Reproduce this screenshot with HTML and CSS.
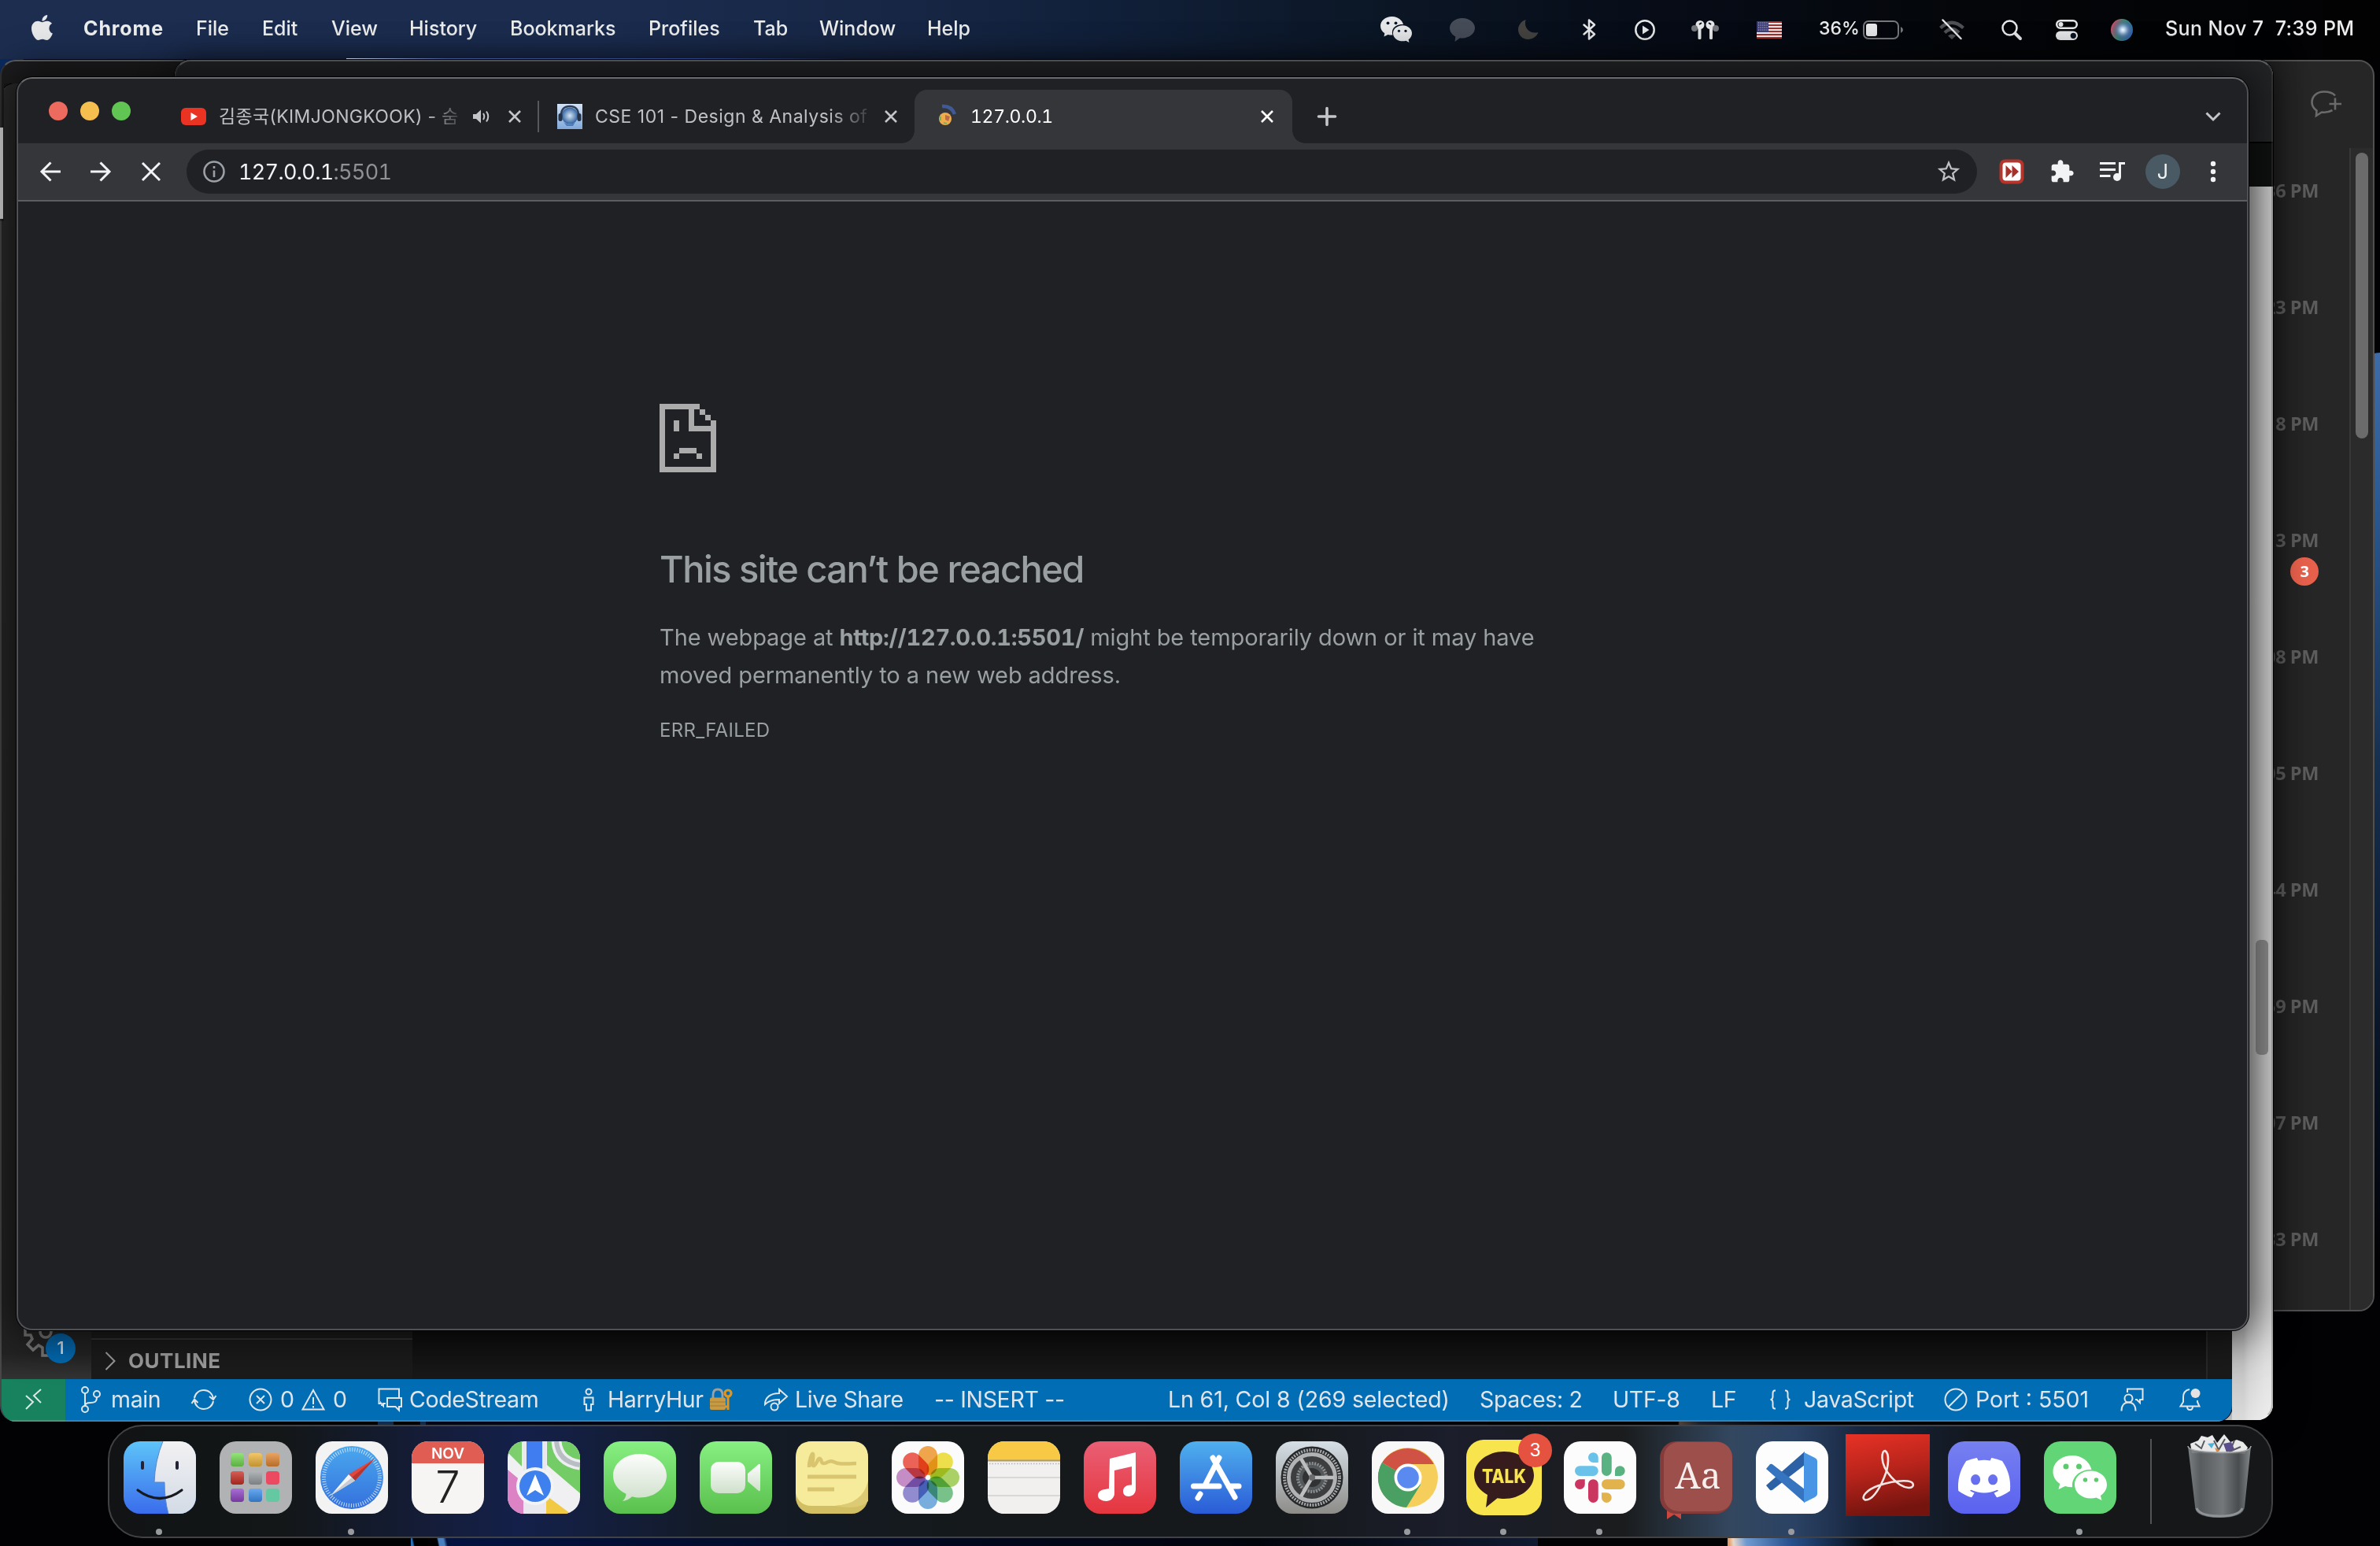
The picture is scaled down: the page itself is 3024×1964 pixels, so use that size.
FILE: index.html
```html
<!DOCTYPE html>
<html lang="en">
<head>
<meta charset="utf-8">
<title>Desktop</title>
<link rel="stylesheet" href="styles.css">
</head>
<body>
<div class="desktop">
  <div class="wall wall-left"></div>
  <div class="wall wall-right"></div>
  <div class="wall wall-gap"></div>
  <div class="wall wall-dusk"></div>
  <div class="wall wall-sea"></div>
  <div class="wall wall-earth"></div>

  <header class="menubar">
    <svg class="apple" viewBox="4 32 364 448" preserveAspectRatio="none"><path d="M318.7 268.7c-.2-36.7 16.4-64.4 50-84.8-18.8-26.9-47.2-41.7-84.7-44.6-35.5-2.8-74.3 20.7-88.5 20.7-15 0-49.4-19.7-76.4-19.7C63.3 141.2 4 184.8 4 273.5q0 39.3 14.4 81.2c12.8 36.7 59 126.7 107.2 125.2 25.2-.6 43-17.9 75.8-17.9 31.8 0 48.3 17.9 76.4 17.9 48.6-.7 90.4-82.5 102.6-119.3-65.2-30.7-61.7-90-61.7-91.9zm-56.6-164.2c27.3-32.4 24.8-61.9 24-72.5-24.1 1.4-52 16.4-67.9 34.9-17.5 19.8-27.8 44.3-25.6 71.9 26.1 2 49.9-11.4 69.5-34.3z"/></svg>
    <span class="app-name">Chrome</span>
    <span>File</span><span>Edit</span><span>View</span><span>History</span><span>Bookmarks</span><span>Profiles</span><span>Tab</span><span>Window</span><span>Help</span>
    <svg width="40" height="33" viewBox="0 0 40 33"><path d="M14.500 0C6.500 0 0 5.200 0 12c0 4 2 7 5.300 9.300L4.500 25.500l5-2.600c2 .5 4 .8 5.900.6C13 15 20 9.500 29 10 27.500 4 21.500 0 14.500 0z"/><path d="M28 11.300c-6.800 0-12 4.500-12 10s5.200 10 12 10c1.600 0 3-.2 4.300-.6l4.200 2.200-.9-3.600c2.700-1.900 4.400-4.800 4.400-8 0-5.500-5.300-10-12-10z"/><g class="hole"><circle cx="9.500" cy="8.300" r="1.900"/><circle cx="19.500" cy="8.300" r="1.900"/><circle cx="23.500" cy="18.300" r="1.600"/><circle cx="32" cy="18.300" r="1.600"/></g></svg>
    <svg width="32" height="30" viewBox="0 0 32 30"><path class="dim" d="M16 0c9 0 16 5.600 16 12.600S25 25.500 16 25.500c-1 0-2 0-3-.2L6.500 30l.8-6.500C3 21.200 0 17.300 0 12.600 0 5.600 7 0 16 0z"/></svg>
    <svg width="26" height="25" viewBox="0 0 26 25"><path class="dusk" d="M9.500 0C3.500 2 0 7.500 0 12.500 0 19.500 5.500 25 12.500 25 18.500 25 23.500 21.500 25.500 16 16 18.500 6.500 12 9.500 0z"/></svg>
    <svg width="17" height="27" viewBox="0 0 17 27"><path class="line" d="M1.500 7.500l13.500 12-7 6V1.500l7 6-13.500 12"/></svg>
    <svg width="26" height="26" viewBox="0 0 26 26"><circle class="line" cx="13" cy="13" r="11.700"/><path d="M10 7.500v11l8.500-5.500z"/></svg>
    <svg width="35" height="24" viewBox="0 0 35 24"><circle cx="11" cy="5.500" r="5.500"/><circle cx="24" cy="5.500" r="5.500"/><rect x="8.500" y="7" width="4" height="17" rx="1.500"/><rect x="23" y="7" width="4" height="17" rx="1.500"/><circle class="dim2" cx="4" cy="10" r="4"/><circle class="dim2" cx="31" cy="10" r="4"/><path class="hole-line" d="M10 5l3-2M25 5l-3-2"/></svg>
    <svg width="32" height="22" viewBox="0 0 32 22"><rect width="32" height="22" fill="#f2f0f0"/><path d="M0 1h32M0 5h32M0 9h32M0 13h32M0 17h32M0 21h32" stroke="#ab2f2b" stroke-width="2"/><rect width="15" height="14" fill="#3f3f78"/><path d="M2 2h12M2 5h12M2 8h12M2 11h12" stroke="#c9c9dd" stroke-width="1.200" stroke-dasharray="1.200 1.400"/></svg>
    <span class="battery-pct">36%</span>
    <svg width="52" height="24" viewBox="0 0 52 24"><rect x="1" y="1" width="44" height="22" rx="6" fill="none" stroke="#77787b" stroke-width="2"/><rect x="4" y="4" width="14" height="16" rx="3"/><path d="M48 8q3 1.500 3 4t-3 4z" fill="#77787b"/></svg>
    <svg width="32" height="27" viewBox="0 0 32 27"><g fill="none" stroke="#505156" stroke-width="4.200"><path d="M1.500 11.500Q16-2 30.500 11.500"/><path d="M7 17.500Q16 8.500 25 17.500"/></g><path d="M16 26l-5-4.500q5-4 10 0z" fill="#505156"/><path class="line thin" d="M4.500 1.500l23 23.500"/></svg>
    <svg width="26" height="26" viewBox="0 0 26 26"><circle class="line" cx="10.500" cy="10.500" r="9"/><path class="line fat" d="M17.500 17.500l6.500 6.500"/></svg>
    <svg width="28" height="26" viewBox="0 0 28 26"><rect class="line" x="1.200" y="1.200" width="25.600" height="9.600" rx="4.800"/><circle cx="6.500" cy="6" r="3"/><rect y="14.500" width="28" height="11.500" rx="5.700"/><circle class="hole" cx="22.300" cy="20.300" r="3.600"/></svg>
    <svg width="28" height="28" viewBox="0 0 28 28"><defs><radialGradient id="siri" cx=".55" cy=".5" r=".55"><stop offset="0" stop-color="#fff"/><stop offset=".25" stop-color="#a9c9e8"/><stop offset=".6" stop-color="#5f6fa8" stop-opacity=".5"/><stop offset="1" stop-color="#333" stop-opacity="0"/></radialGradient><linearGradient id="siri2" x1="0" x2="1" y1=".3" y2=".7"><stop offset="0" stop-color="#d8466d"/><stop offset=".45" stop-color="#3a8f78"/><stop offset="1" stop-color="#2e66c2"/></linearGradient></defs><circle cx="14" cy="14" r="14" fill="url(#siri2)"/><circle cx="14" cy="14" r="13" fill="url(#siri)"/></svg>
    <span class="clock">Sun Nov 7&nbsp; 7:39 PM</span>
  </header>

  <section class="window chat">
    <div class="chat-main">
      <svg class="new-chat" width="40" height="34" viewBox="0 0 40 34"><path d="M31 6.500C28 3 23 1.500 17 1.500 8 1.500 1.500 7 1.500 15c0 5 2.500 8 6 10.500L7 32l7-4.500c4.500.8 9 0 13.500-2.500M31 9.500v15M23.500 17H39"/></svg>
      <ul class="times">
        <li>36 PM</li><li>23 PM</li><li>8 PM</li><li>3 PM<b class="unread">3</b></li><li>08 PM</li><li>05 PM</li><li>44 PM</li><li>59 PM</li><li>07 PM</li><li>33 PM</li>
      </ul>
    </div>
    <div class="chat-scroll"><i></i></div>
  </section>

  <section class="window backdrop"></section>
  <section class="window page">
    <div class="page-head"></div>
    <div class="page-bar"></div>
    <div class="page-body"><i></i></div>
  </section>
  <div class="sliver"></div>

  <section class="window code">
    <div class="code-body">
      <div class="activity">
        <svg width="60" height="60" viewBox="0 0 60 60"><g fill="none" stroke="#777" stroke-width="3.500"><path d="M6 8v12h7l2 5-6 7 7 7 7-6 5 3v10h10V36"/><circle cx="32" cy="16" r="7"/></g></svg>
        <b class="activity-badge">1</b>
      </div>
      <div class="sidebar"><div class="outline"><svg width="14" height="24" viewBox="0 0 14 24"><path d="M1.500 1l11 11-11 11"/></svg><span>OUTLINE</span></div></div>
      <div class="editor"></div>
    </div>
    <footer class="statusbar">
      <div class="remote"><svg width="24" height="28" viewBox="0 0 24 28"><path d="M2 9l9 8-9 9M21 1l-9 8 9 9"/></svg></div>
      <svg width="26" height="34" viewBox="0 0 26 34"><circle cx="6" cy="5" r="4"/><circle cx="6" cy="29" r="4"/><circle cx="21" cy="10" r="4"/><path d="M6 9v16M21 14c0 6-3 7-8 7-4 0-7 1-7 4"/></svg>
      <span>main</span>
      <svg width="32" height="28" viewBox="0 0 32 28"><path d="M4 12C5 6 10 2 16 2s11 4 12 11M28 16c-1 6-6 10-12 10S5 22 4 15M23 10l5 4 3.500-5M8.500 18L4 13.500.5 19"/></svg>
      <svg width="30" height="30" viewBox="0 0 30 30"><circle cx="15" cy="15" r="13.500"/><path d="M10 10l10 10M20 10L10 20"/></svg>
      <span>0</span>
      <svg width="30" height="28" viewBox="0 0 30 28"><path d="M15 2L1.500 26.500h27zM15 11v9M15 22v2.500"/></svg>
      <span>0</span>
      <svg width="32" height="30" viewBox="0 0 32 30"><path d="M10 20H7v3l-3-3.500V20H1.500V1.500H27V12M12 13h18v11h-3v4.500L22.500 24H12zM5 20v3"/></svg>
      <span>CodeStream</span>
      <svg width="14" height="30" viewBox="0 0 14 30"><circle cx="7" cy="5" r="3.500"/><path d="M1.500 12.500h11V21H10v7.500H4V21H1.500z"/></svg>
      <span>HarryHur</span>
      <svg width="30" height="30" viewBox="0 0 30 30"><path d="M5 14V9q0-7 6-7t6 7v5" fill="none" stroke="#9da0a0" stroke-width="2.800"/><rect x="1" y="12.500" width="20" height="15.500" rx="2" fill="#c79b45" stroke="none"/><path d="M1 18h20M1 23h20" stroke="#a37b2e" stroke-width="1"/><g stroke="#e0951d" fill="none"><circle cx="24" cy="7" r="4" stroke-width="3.200"/><path d="M24 11v17M24 24h-4" stroke-width="3"/></g></svg>
      <svg width="32" height="30" viewBox="0 0 32 30"><path d="M20 2l10 9-10 9v-5c-8 0-14 2-18 6C2 12 9 7 20 7z"/><circle cx="14" cy="24" r="4.500"/></svg>
      <span>Live Share</span>
      <span>-- INSERT --</span>
      <span class="cursor-pos">Ln 61, Col 8 (269 selected)</span>
      <span>Spaces: 2</span>
      <span>UTF-8</span>
      <span>LF</span>
      <svg width="28" height="26" viewBox="0 0 28 26"><path d="M8 1.500H7C5 1.500 4.500 3 4.500 5v4c0 2.500-1 4-3 4 2 0 3 1.500 3 4v4c0 2 .5 3.500 2.500 3.500h1M20 1.500h1c2 0 2.500 1.500 2.500 3.500v4c0 2.500 1 4 3 4-2 0-3 1.500-3 4v4c0 2-.5 3.500-2.500 3.500h-1"/></svg>
      <span class="lang">JavaScript</span>
      <svg width="30" height="30" viewBox="0 0 30 30"><circle cx="15" cy="15" r="13.500"/><path d="M6 24L24 6"/></svg>
      <span class="port">Port : 5501</span>
      <svg width="30" height="30" viewBox="0 0 30 30"><path d="M9 6V1.500h19.500V15H25v4l-4-4h-2"/><circle cx="10.500" cy="13.500" r="5"/><path d="M1.500 29.500c0-7 3.500-11 9-11s9 4 9 11"/></svg>
      <svg width="28" height="30" viewBox="0 0 28 30"><path d="M13 2C8 3 5 6 5 12v6l-3.500 5.500h24L23 18v-2M10 24c0 2.500 1.200 4 3.500 4s3.500-1.500 3.500-4"/><circle cx="20.500" cy="7" r="6" fill="#e3e3e3" stroke="none"/></svg>
    </footer>
  </section>

  <section class="window chrome">
    <div class="tabstrip">
      <div class="lights"><i class="red"></i><i class="yellow"></i><i class="green"></i></div>
      <div class="tab tab-video">
        <svg width="32" height="22" viewBox="0 0 32 22"><rect width="32" height="22" rx="6" fill="#ea3323"/><path d="M12.500 6v10l8.500-5z" fill="#fff"/></svg>
        <span class="tab-title fade">김종국(KIMJONGKOOK) - 숨</span>
        <svg class="speaker" width="22" height="18" viewBox="0 0 22 18"><path d="M0 6h4l6-5.500v17L4 12H0z"/><path d="M13 5q2.500 4 0 8M17 2.500q4.500 6.500 0 13" fill="none" stroke="#c3c5c8" stroke-width="2"/></svg>
        <svg class="x" width="16" height="16" viewBox="0 0 16 16"><path d="M1 1l14 14M15 1L1 15"/></svg>
      </div>
      <div class="tab tab-course">
        <svg width="32" height="32" viewBox="0 0 32 32"><defs><linearGradient id="fav" x1="0" x2="0" y1="0" y2="1"><stop offset="0" stop-color="#d3e2f5"/><stop offset="1" stop-color="#7fa9dc"/></linearGradient><radialGradient id="orb"><stop offset="0" stop-color="#d5e6f5"/><stop offset="1" stop-color="#31619f"/></radialGradient></defs><rect width="32" height="32" fill="url(#fav)"/><circle cx="16" cy="15" r="10.500" fill="url(#orb)"/><path d="M5 17Q4 3 16 3t11 14" fill="none" stroke="#2d3f5a" stroke-width="2.500"/><rect x="1.500" y="12" width="5" height="10" rx="2.500" fill="#253248"/><rect x="25.500" y="12" width="5" height="10" rx="2.500" fill="#253248"/><path d="M8 23q8 6 15 0l-3 5h-8z" fill="#4b7ab5"/></svg>
        <span class="tab-title fade">CSE 101 - Design &amp; Analysis of</span>
        <svg class="x" width="16" height="16" viewBox="0 0 16 16"><path d="M1 1l14 14M15 1L1 15"/></svg>
      </div>
      <div class="tab tab-active">
        <svg width="26" height="32" viewBox="0 0 26 32"><path d="M5 3q12-1 16 10" fill="none" stroke="#3f5a96" stroke-width="4.500"/><circle cx="9" cy="19" r="8" fill="#efab4c"/><path d="M9 14l6 2-2 6-4-2z" fill="#bd6a4a"/><path d="M3 16v5M7 24l4 1" stroke="#7fae5b" stroke-width="2"/></svg>
        <span class="tab-title">127.0.0.1</span>
        <svg class="x" width="16" height="16" viewBox="0 0 16 16"><path d="M1 1l14 14M15 1L1 15"/></svg>
      </div>
      <svg class="plus" width="24" height="24" viewBox="0 0 24 24"><path d="M12 1.500v21M1.500 12h21"/></svg>
      <svg class="chevron" width="20" height="12" viewBox="0 0 20 12"><path d="M1.500 1.500L10 10l8.500-8.500"/></svg>
    </div>
    <div class="toolbar">
      <svg class="nav" width="26" height="26" viewBox="0 0 26 26"><path d="M26 13H2.500M13.500 1.500L2 13l11.500 11.500"/></svg>
      <svg class="nav" width="26" height="26" viewBox="0 0 26 26"><path d="M0 13h23.500M12.500 1.500L24 13 12.500 24.500"/></svg>
      <svg class="nav" width="26" height="26" viewBox="0 0 26 26"><path d="M2 2l22 22M24 2L2 24"/></svg>
      <div class="omnibox">
        <svg width="28" height="28" viewBox="0 0 28 28"><circle cx="14" cy="14" r="12.500" fill="none" stroke="#9aa0a6" stroke-width="2.600"/><path d="M14 12.500V21M14 7v3" stroke="#9aa0a6" stroke-width="2.600"/></svg>
        <span class="url">127.0.0.1<em>:5501</em></span>
        <svg class="star" width="34" height="34" viewBox="0 0 24 24"><path d="M22 9.240l-7.190-.62L12 2 9.190 8.630 2 9.240l5.460 4.730L5.820 21 12 17.270 18.180 21l-1.630-7.030L22 9.240zM12 15.400l-3.760 2.270 1-4.280-3.320-2.880 4.380-.38L12 6.100l1.710 4.040 4.380.38-3.320 2.880 1 4.280L12 15.400z"/></svg>
      </div>
      <svg width="32" height="32" viewBox="0 0 32 32"><rect x=".5" y=".5" width="31" height="31" rx="7" fill="#b5342b"/><rect x="4.500" y="4.500" width="23" height="23" rx="4" fill="#fff"/><path d="M8.500 8l8 8-8 8zM16.500 8l8.500 8-8.500 8z" fill="#a8322a"/></svg>
      <svg width="32" height="32" viewBox="0 0 24 24"><path fill="#f1f3f4" d="M20.500 11H19V7c0-1.100-.9-2-2-2h-4V3.500C13 2.120 11.880 1 10.500 1S8 2.120 8 3.500V5H4c-1.100 0-1.990.9-1.990 2v3.800H3.500c1.490 0 2.700 1.210 2.700 2.700s-1.210 2.700-2.700 2.700H2V20c0 1.100.9 2 2 2h3.800v-1.500c0-1.490 1.210-2.700 2.700-2.700 1.490 0 2.700 1.210 2.700 2.700V22H17c1.100 0 2-.9 2-2v-4h1.500c1.380 0 2.500-1.120 2.500-2.500S21.880 11 20.500 11z"/></svg>
      <svg width="32" height="26" viewBox="0 0 32 26"><path d="M0 2.500h20M0 10.500h20M0 18.500h13.500" stroke="#f1f3f4" stroke-width="3"/><circle cx="22" cy="20" r="5" fill="#f1f3f4"/><path d="M25.500 20V2.500H32" fill="none" stroke="#f1f3f4" stroke-width="3"/></svg>
      <span class="avatar">J</span>
      <svg width="8" height="28" viewBox="0 0 8 28"><g fill="#f1f3f4"><circle cx="4" cy="4" r="3.200"/><circle cx="4" cy="14" r="3.200"/><circle cx="4" cy="24" r="3.200"/></g></svg>
    </div>
    <main class="error">
      <svg width="72" height="87" viewBox="0 0 72 87" shape-rendering="crispEdges"><path fill="#ababab" d="M0 0h51v7H44v21h21v-7h7v66H0zM7 7v73h58V35H37V7zM51 7h7v7h-7zM58 14h7v7h-7zM18 21h7v14h-7zM25 56h22v7H25zM18 63h7v7h-7zM47 63h7v7h-7z"/></svg>
      <h1>This site can’t be reached</h1>
      <p>The webpage at <b>http://127.0.0.1:5501/</b> might be temporarily down or it may have<br>moved permanently to a new web address.</p>
      <small>ERR_FAILED</small>
    </main>
  </section>

  <nav class="dock">
    <div class="app on"><svg viewBox="0 0 92 92"><defs><linearGradient id="fa" x1="0" x2="0" y1="0" y2="1"><stop offset="0" stop-color="#5dc4f8"/><stop offset="1" stop-color="#3a6cec"/></linearGradient><linearGradient id="fb" x1="0" x2="0" y1="0" y2="1"><stop offset="0" stop-color="#f2f1f2"/><stop offset="1" stop-color="#d3dbe6"/></linearGradient><clipPath id="sq"><rect width="92" height="92" rx="21"/></clipPath></defs><g clip-path="url(#sq)"><rect width="92" height="92" fill="url(#fa)"/><path d="M50 0Q40 24 39 52h13q0 22 5 40h35V0z" fill="url(#fb)"/><path d="M50 0Q40 24 39 52h13q0 22 5 40" fill="none" stroke="#5a87c9" stroke-width="1"/></g><path d="M24 27v7M68 27v7" stroke="#223" stroke-width="4" stroke-linecap="round"/><path d="M18 62q28 21 56 0" fill="none" stroke="#16191f" stroke-width="3.200" stroke-linecap="round"/></svg></div>
    <div class="app"><svg viewBox="0 0 92 92"><defs><linearGradient id="sh" x1="0" x2="0" y1="0" y2="1"><stop offset="0" stop-color="#fff" stop-opacity=".22"/><stop offset="1" stop-color="#000" stop-opacity=".2"/></linearGradient></defs><rect width="92" height="92" rx="21" fill="#b1b2b4"/><rect x="14" y="15" width="17" height="17" rx="4" fill="#75dc54"/><rect x="37" y="15" width="17" height="17" rx="4" fill="#f1b840"/><rect x="59" y="15" width="17" height="17" rx="4" fill="#e48a35"/><rect x="14" y="38" width="17" height="17" rx="4" fill="#cb3226"/><rect x="37" y="38" width="17" height="17" rx="4" fill="#9ba1a5"/><rect x="59" y="38" width="17" height="17" rx="4" fill="#ec4a60"/><rect x="14" y="60" width="17" height="17" rx="4" fill="#9247c8"/><rect x="37" y="60" width="17" height="17" rx="4" fill="#3f92f0"/><rect x="59" y="60" width="17" height="17" rx="4" fill="#64c9a2"/><g fill="url(#sh)"><rect x="14" y="15" width="17" height="17" rx="4"/><rect x="37" y="15" width="17" height="17" rx="4"/><rect x="59" y="15" width="17" height="17" rx="4"/><rect x="14" y="38" width="17" height="17" rx="4"/><rect x="37" y="38" width="17" height="17" rx="4"/><rect x="14" y="60" width="17" height="17" rx="4"/><rect x="37" y="60" width="17" height="17" rx="4"/></g></svg></div>
    <div class="app on"><svg viewBox="0 0 92 92"><defs><linearGradient id="sa" x1="0" x2="0" y1="0" y2="1"><stop offset="0" stop-color="#4aa8ee"/><stop offset="1" stop-color="#3470dd"/></linearGradient></defs><rect width="92" height="92" rx="21" fill="#f3f3f3"/><circle cx="46" cy="46" r="40" fill="url(#sa)"/><circle cx="46" cy="46" r="35.500" fill="none" stroke="#c7dff6" stroke-width="5" stroke-dasharray="1 2.100"/><path d="M75 22L50 50l-8-8z" fill="#e0483e"/><path d="M75 22L50 50l-4-4z" fill="#b7352f"/><path d="M19 69l23-27 8 8z" fill="#f4f4f4"/><path d="M19 69l27-23 4 4z" fill="#c8ccd2"/></svg></div>
    <div class="app"><svg viewBox="0 0 92 92"><g clip-path="url(#sq)"><rect width="92" height="92" fill="#f7f5f3"/><rect width="92" height="28" fill="#df5d52"/></g><text x="46" y="22" class="cal-m">NOV</text><text x="46" y="77.500" class="cal-d">7</text></svg></div>
    <div class="app"><svg viewBox="0 0 92 92"><g clip-path="url(#sq)"><rect width="92" height="92" fill="#f0f0f2"/><path d="M0 36l24 20v36H0z" fill="#dc83c5"/><path d="M0 0h18v32L0 14z" fill="#7ccf6c"/><path d="M50 0h42v66L50 30z" fill="#74cc66"/><path d="M62 0q2 26 30 30" fill="none" stroke="#eceef0" stroke-width="13"/><path d="M62 0q2 26 30 30" fill="none" stroke="#b9bec4" stroke-width="6"/><path d="M48 92V68l32 24z" fill="#f1c943"/><rect x="20" width="29" height="92" fill="#e8e8ee"/><rect x="24" width="20" height="50" fill="#3f7df0"/></g><circle cx="35" cy="57" r="24" fill="#f2f3f6"/><circle cx="35" cy="57" r="20" fill="#3d80ee"/><path d="M35 42l11 27-11-7-11 7z" fill="#fff"/></svg></div>
    <div class="app"><svg viewBox="0 0 92 92"><defs><linearGradient id="gr" x1="0" x2="0" y1="0" y2="1"><stop offset="0" stop-color="#87f082"/><stop offset="1" stop-color="#5ac04d"/></linearGradient><linearGradient id="wh" x1="0" x2="0" y1="0" y2="1"><stop offset="0" stop-color="#fcfdfc"/><stop offset="1" stop-color="#cfe0cb"/></linearGradient></defs><rect width="92" height="92" rx="21" fill="url(#gr)"/><path d="M46 16c19 0 34 12 34 27.500S65 71.500 46 71.500c-4 0-7-.4-10-1.200-3 3-7 5-12 5.700 3-3 4.500-6 4.500-9.200C18 62 12 53.500 12 43.500 12 28 27 16 46 16z" fill="url(#wh)"/></svg></div>
    <div class="app"><svg viewBox="0 0 92 92"><rect width="92" height="92" rx="21" fill="url(#gr)"/><rect x="14" y="26" width="44" height="40" rx="10" fill="url(#wh)"/><path d="M61 41l14-12q2-1 2 1.500v31q0 2.500-2 1.500L61 51z" fill="url(#wh)"/></svg></div>
    <div class="app"><svg viewBox="0 0 92 92"><rect width="92" height="92" rx="21" fill="#d3bf63"/><path d="M21 0h50q21 0 21 21v30Q85 80 50 82H21Q4 82 0 66V21Q0 0 21 0z" fill="#f5eb9b"/><path d="M92 51Q85 80 50 82q30 6 42-6z" fill="#dccb74"/><path d="M17 33c0-8 3-18 5-17s-3 16 1 15 5-11 8-9 0 6 5 6 6-5 12-2 10 3 29 2" fill="none" stroke="#d9c570" stroke-width="4.500"/><path d="M15 45h62M15 61h34" stroke="#d9c570" stroke-width="5"/></svg></div>
    <div class="app"><svg viewBox="0 0 92 92"><rect width="92" height="92" rx="21" fill="#fbfbfb"/><g class="petals"><rect x="34" y="6" width="24" height="37" rx="12" fill="#f2a13c"/><rect x="34" y="6" width="24" height="37" rx="12" fill="#efe13c" transform="rotate(45 46 46)"/><rect x="34" y="6" width="24" height="37" rx="12" fill="#a5d25a" transform="rotate(90 46 46)"/><rect x="34" y="6" width="24" height="37" rx="12" fill="#6fc081" transform="rotate(135 46 46)"/><rect x="34" y="6" width="24" height="37" rx="12" fill="#70a9e0" transform="rotate(180 46 46)"/><rect x="34" y="6" width="24" height="37" rx="12" fill="#8a83cf" transform="rotate(225 46 46)"/><rect x="34" y="6" width="24" height="37" rx="12" fill="#c285c4" transform="rotate(270 46 46)"/><rect x="34" y="6" width="24" height="37" rx="12" fill="#ee5648" transform="rotate(315 46 46)"/></g></svg></div>
    <div class="app"><svg viewBox="0 0 92 92"><g clip-path="url(#sq)"><rect width="92" height="92" fill="#f1f0ee"/><rect width="92" height="24" fill="#f7c945"/><path d="M0 24.500h92" stroke="#a99a72" stroke-width="2"/><path d="M2 28.500h90" stroke="#b5b5b3" stroke-width="1.500" stroke-dasharray="1.500 2"/><path d="M0 46h92M0 69h92" stroke="#cfcfd2" stroke-width="1.600"/></g></svg></div>
    <div class="app"><svg viewBox="0 0 92 92"><defs><linearGradient id="mu" x1="0" x2="0" y1="0" y2="1"><stop offset="0" stop-color="#ea5f75"/><stop offset="1" stop-color="#e5363f"/></linearGradient></defs><rect width="92" height="92" rx="21" fill="url(#mu)"/><path d="M33 22l33-8v47c0 5-4 9-9 9s-7-3-7-6.500c0-5 4-8 9-8h2V32l-22 5v29c0 6-5 10-10.500 10S18 73 18 69c0-5 4-7.500 9-8l5-1z" fill="#fff"/></svg></div>
    <div class="app"><svg viewBox="0 0 92 92"><defs><linearGradient id="as" x1="0" x2="0" y1="0" y2="1"><stop offset="0" stop-color="#4fb0ee"/><stop offset="1" stop-color="#2a5bd7"/></linearGradient></defs><rect width="92" height="92" rx="21" fill="url(#as)"/><g stroke="#fff" stroke-width="7" stroke-linecap="round"><path d="M50 21L33 54M42 21l28 50M17.500 57H50M62 57h13M26 67l-3 5"/></g></svg></div>
    <div class="app"><svg viewBox="0 0 92 92"><defs><linearGradient id="pr" x1="0" x2="0" y1="0" y2="1"><stop offset="0" stop-color="#d5dfe6"/><stop offset="1" stop-color="#8d8c89"/></linearGradient></defs><rect width="92" height="92" rx="21" fill="url(#pr)"/><circle cx="46" cy="46" r="39.500" fill="#26282a"/><circle cx="46" cy="46" r="35" fill="none" stroke="#a5a8aa" stroke-width="4" stroke-dasharray="2 1.500"/><circle cx="46" cy="46" r="29.500" fill="#3c3e40" stroke="#b0b2b4" stroke-width="5"/><circle cx="46" cy="46" r="18" fill="#55585a" stroke="#8b8e90" stroke-width="4" stroke-dasharray="2 1.500"/><circle cx="46" cy="46" r="12" fill="#303234"/><path d="M46 46h28M46 46L32 22M46 46L32 70" stroke="#bcbec0" stroke-width="4.500"/><circle cx="46" cy="46" r="4" fill="#6a6c6e"/></svg></div>
    <div class="app on"><svg viewBox="0 0 92 92"><rect width="92" height="92" rx="21" fill="#f8f8f8"/><circle cx="46" cy="46" r="38" fill="#f6ce5b"/><path d="M46 46L13 27A38 38 0 0 0 44 84L62 55z" fill="#4a9f63"/><path d="M46 46L13.100 27a38 38 0 0 1 65.800 2H46a17 17 0 0 0-15 26z" fill="#cf5245"/><path d="M13.100 27A38 38 0 0 0 9 54l22 1z" fill="#4a9f63"/><circle cx="46" cy="46" r="17.500" fill="#fff"/><circle cx="46" cy="46" r="13.800" fill="#5a8af0"/></svg></div>
    <div class="app talk on"><svg viewBox="0 0 96 96"><rect width="96" height="96" rx="22" fill="#f8e44c"/><path d="M48 15c21 0 38 13.500 38 30S69 75 48 75c-3 0-6-.3-8.500-.8L25 86l2-16C17 64.500 10 55.500 10 45c0-16.500 17-30 38-30z" fill="#371c1d"/><text x="20" y="54.500" class="talk-t" textLength="56" lengthAdjust="spacingAndGlyphs">TALK</text></svg><b class="badge">3</b></div>
    <div class="app on"><svg viewBox="0 0 92 92"><rect width="92" height="92" rx="21" fill="#fcfcfc"/><g transform="translate(14 14) scale(1.185)"><path fill="#68c2ea" d="M19.712.133a5.381 5.381 0 0 0-5.376 5.387 5.381 5.381 0 0 0 5.376 5.386h5.376V5.520A5.381 5.381 0 0 0 19.712.133m0 14.365H5.376A5.381 5.381 0 0 0 0 19.884a5.381 5.381 0 0 0 5.376 5.387h14.336a5.381 5.381 0 0 0 5.376-5.387 5.381 5.381 0 0 0-5.376-5.386"/><path fill="#5ab283" d="M53.760 19.884a5.381 5.381 0 0 0-5.376-5.386 5.381 5.381 0 0 0-5.376 5.386v5.387h5.376a5.381 5.381 0 0 0 5.376-5.387m-14.336 0V5.520A5.381 5.381 0 0 0 34.048.133a5.381 5.381 0 0 0-5.376 5.387v14.364a5.381 5.381 0 0 0 5.376 5.387 5.381 5.381 0 0 0 5.376-5.387"/><path fill="#e2b24d" d="M34.048 54a5.381 5.381 0 0 0 5.376-5.387 5.381 5.381 0 0 0-5.376-5.386h-5.376v5.386A5.381 5.381 0 0 0 34.048 54m0-14.365h14.336a5.381 5.381 0 0 0 5.376-5.386 5.381 5.381 0 0 0-5.376-5.387H34.048a5.381 5.381 0 0 0-5.376 5.387 5.381 5.381 0 0 0 5.376 5.386"/><path fill="#cb3660" d="M0 34.249a5.381 5.381 0 0 0 5.376 5.386 5.381 5.381 0 0 0 5.376-5.386v-5.387H5.376A5.381 5.381 0 0 0 0 34.250m14.336-.001v14.364A5.381 5.381 0 0 0 19.712 54a5.381 5.381 0 0 0 5.376-5.387V34.250a5.381 5.381 0 0 0-5.376-5.387 5.381 5.381 0 0 0-5.376 5.387"/></g></svg></div>
    <div class="app"><svg viewBox="0 0 92 92"><path d="M9 80h18v19l-9-6-9 6z" fill="#c9473c"/><rect width="92" height="92" rx="21" fill="#853b3a"/><rect x="5" y="1" width="87" height="88" rx="19" fill="#9d4f4c"/><text x="48.500" y="60" class="dict">Aa</text></svg></div>
    <div class="app on"><svg viewBox="0 0 92 92"><rect width="92" height="92" rx="21" fill="#fdfdfd"/><path d="M62 13L13 56l5 6q2 1 4-1l40-31z" fill="#2c62a5"/><path d="M62 78L13 35l5-6q2-1 4 1l40 31z" fill="#3674bf"/><path d="M61 14l14 7q3 1.500 3 4v42q0 2.500-3 4l-14 7z" fill="#4795e4"/></svg></div>
    <div class="app pdf"><svg viewBox="0 0 107 104"><defs><linearGradient id="pd" x1="0" x2=".2" y1="0" y2="1"><stop offset="0" stop-color="#e83226"/><stop offset=".5" stop-color="#b8241b"/><stop offset="1" stop-color="#75140f"/></linearGradient></defs><rect width="107" height="104" fill="url(#pd)"/><path d="M50 21c6 3 5 20-1 34S34 84 25 83.500c-7-3 2-13 16-18 12-4 27-7 38-6 9 1 9 9 1 8.500C66 67 47 46 46.500 30c0-6 1.500-9 3.500-9z" fill="none" stroke="#f3e6e4" stroke-width="2.600"/></svg></div>
    <div class="app"><svg viewBox="0 0 92 92"><defs><linearGradient id="di" x1="0" x2="0" y1="0" y2="1"><stop offset="0" stop-color="#7780f0"/><stop offset="1" stop-color="#5a62f0"/></linearGradient></defs><rect width="92" height="92" rx="21" fill="url(#di)"/><path transform="translate(13 13) scale(2.760)" fill="#fff" d="M20.317 4.370a19.791 19.791 0 00-4.885-1.515.074.074 0 00-.079.037c-.211.375-.445.865-.608 1.250-1.845-.276-3.680-.276-5.487 0-.164-.393-.406-.874-.618-1.250a.077.077 0 00-.078-.037 19.736 19.736 0 00-4.885 1.515.070.070 0 00-.032.028C.533 9.046-.319 13.580.099 18.058a.082.082 0 00.031.056c2.053 1.508 4.041 2.423 5.993 3.029a.078.078 0 00.084-.028c.462-.630.873-1.295 1.226-1.994a.076.076 0 00-.042-.106c-.653-.248-1.274-.550-1.872-.892a.077.077 0 01-.008-.128c.126-.094.252-.192.372-.291a.074.074 0 01.078-.011c3.928 1.793 8.180 1.793 12.061 0a.074.074 0 01.079.010c.120.099.246.198.373.292a.077.077 0 01-.007.128 12.299 12.299 0 01-1.873.891.077.077 0 00-.041.107c.360.698.772 1.363 1.225 1.993a.076.076 0 00.084.029c1.961-.607 3.950-1.522 6.002-3.029a.077.077 0 00.031-.055c.500-5.177-.838-9.674-3.549-13.660a.061.061 0 00-.031-.029zM8.020 15.331c-1.183 0-2.157-1.086-2.157-2.419 0-1.333.956-2.419 2.157-2.419 1.211 0 2.176 1.095 2.157 2.419 0 1.333-.956 2.419-2.157 2.419zm7.975 0c-1.183 0-2.157-1.086-2.157-2.419 0-1.333.955-2.419 2.157-2.419 1.211 0 2.176 1.095 2.157 2.419 0 1.333-.946 2.419-2.157 2.419z"/></svg></div>
    <div class="app on"><svg viewBox="0 0 92 92"><rect width="92" height="92" rx="21" fill="#62d576"/><path d="M36 18c-14 0-24.500 9-24.500 20.500 0 6.500 3.500 12 8.800 15.500L18.500 61l8.500-4q4 1.200 9 1.300C35 44 47 35.500 60.500 36 58 25.500 48 18 36 18z" fill="#fff"/><path d="M59.500 37.500c-12 0-20.500 7.500-20.500 17.500s9 17.500 20.500 17.500q4 0 7-1l7 3.500-1.600-6c5-3.300 8.100-8.300 8.100-14 0-10-9-17.500-20.500-17.500z" fill="#fff"/><g fill="#5ccb6e"><circle cx="28" cy="32" r="3.500"/><circle cx="44.500" cy="32" r="3.500"/><circle cx="52.500" cy="49" r="2.800"/><circle cx="66.500" cy="49" r="2.800"/></g></svg></div>
    <i class="divider"></i>
    <svg class="trash" viewBox="0 0 82 106"><defs><linearGradient id="tr" x1="0" x2="1" y1="0" y2="0"><stop offset="0" stop-color="#85888b"/><stop offset=".2" stop-color="#5e6265"/><stop offset=".55" stop-color="#7c8083"/><stop offset=".8" stop-color="#4d5154"/><stop offset="1" stop-color="#8e9194"/></linearGradient></defs><path d="M6 24L4 12l10-4 4-6 8 2 6-3 6 10 9-11 8 10 8-3 8 3 6 7-4 8z" fill="#e9e9e9"/><path d="M10 12l8 6 4-10M34 8l6 12 8-14M60 8l-6 14 14-6" fill="none" stroke="#55585c" stroke-width="2"/><path d="M26 12l9-1-4 7z" fill="#4eb1d8"/><path d="M46 12l10-2 4 9-10 4z" fill="#5a4f8a"/><path d="M35 17l6 3-3 4z" fill="#e08a3c"/><path d="M1 15q0 7 40 8t40-8l-8 77q-1 14-32 14T10 92z" fill="url(#tr)" opacity=".92"/><path d="M1 15q0 7 40 8t40-8" fill="none" stroke="#abaeb0" stroke-width="1.500"/><path d="M12 94q4 10 29 10t29-10" fill="none" stroke="#8f9396" stroke-width="3"/></svg>
  </nav>
</div>
</body>
</html>
```
FILE: styles.css
```css
* { box-sizing: border-box; }
html, body { margin: 0; }
body {
  width: 3024px; height: 1964px; overflow: hidden; background: #020204;
  font-family: Inter, "Noto Sans CJK KR", sans-serif;
}
svg { display: block; flex: none; overflow: visible; }
i, em { font-style: normal; }
.desktop { position: relative; width: 3024px; height: 1964px; overflow: hidden; }

/* wallpaper */
.wall { position: absolute; }
.wall-left { left: 0; top: 75px; width: 30px; height: 60px; background: #0b2a5f; }
.wall-right { left: 3010px; top: 448px; width: 14px; height: 1150px; background: linear-gradient(#3d6ca8, #2b5a94 16%, #173050 45%, #071223 80%, #020204); border-top-left-radius: 14px 6px; }
.wall-gap { left: 440px; top: 74px; width: 640px; height: 1px; background: linear-gradient(90deg, #b9c6da, #3c5690 20%, #2a4585 70%, #0000); z-index: 1; }
.wall-dusk { left: 480px; top: 1800px; width: 1800px; height: 12px; background: linear-gradient(90deg, #123a68 20px, #000 20px 54px, #123a68 54px 61px, #03081c 61px, #02040c 1410px, #000 1412px 1652px, #6b5140 1654px, #1c2a40 1680px, #000 1800px); }
.wall-sea { left: 522px; top: 1952px; width: 1432px; height: 12px; background: linear-gradient(78deg, #2b6fb8 3px, #000 5px 34px, #4a80c0 36px 42px, #04123f 46px, #020a24 40%, #02040c 75%, #101a30); }
.wall-earth { left: 2195px; top: 1952px; width: 210px; height: 12px; background: linear-gradient(82deg, #e39a63 2px, #e8d6c8 8px, #6f9ad0 24px, #27508c 80px, #000 190px); }

/* menu bar */
.menubar {
  position: relative; display: grid; align-items: center; height: 75px; padding-left: 40px;
  grid-template-columns: 66px 143px 84px 88px 99px 128px 176px 133px 84px 137px 576px 88px 87px 82px 66px 72px 83px 79px 56px 97px 79px 69px 70px 69px 1fr;
  background: linear-gradient(90deg, #1c2d50, #1b2c4f 25%, #172644 38%, #11203a 46%, #0c1727 57%, #070c17 70%, #040609 83%, #020203);
  color: #eceded; font-size: 25px; font-weight: 500; letter-spacing: 0; white-space: nowrap;
}
.menubar span { margin-top: -3px; }
.menubar svg { fill: #e6e7e9; }
.menubar .apple { width: 26px; height: 32px; margin-top: -5px; }
.menubar .app-name { font-weight: 700; letter-spacing: .9px; }
.menubar .clock { letter-spacing: .42px; }
.menubar .hole { fill: #0a1322; }
.menubar .hole-line { stroke: #0a1018; stroke-width: 2; fill: none; }
.menubar .dim { fill: #464c58; }
.menubar .dim2 { fill: #75787d; }
.menubar .dusk { fill: #444340; }
.menubar .line { fill: none; stroke: #e6e7e9; stroke-width: 2.500px; stroke-linejoin: round; stroke-linecap: round; }
.menubar .fat { stroke-width: 4px; }
.menubar .battery-pct { font-size: 23px; }

/* windows */
.window { position: absolute; overflow: hidden; }
.chat { left: 2600px; top: 76px; width: 417px; height: 1590px; border: 2px solid #505050; border-radius: 20px; background: #262626; display: flex; }
.chat-main { flex: 1; background: linear-gradient(90deg, #1f1f1f 70%, #262626 86%); padding: 37px 39px 0 0; }
.new-chat { margin-left: auto; margin-right: -30px; fill: none; stroke: #6a6a6a; stroke-width: 2.600px; }
.times { list-style: none; margin: 76px 0 0; padding: 0; font: 700 23.500px/34px "Open Sans", sans-serif; letter-spacing: -.4px; color: #5c5c5c; text-align: right; }
.times li { height: 148px; }
.unread { display: block; width: 36px; height: 36px; margin: 5px 0 0 auto; border-radius: 50%; background: #e6604c; color: #fff; font: 700 20px/36px "Open Sans", sans-serif; text-align: center; }
.chat-scroll { width: 30px; margin-top: 110px; padding: 6px 0 0 6px; border-left: 2px solid #383838; background: #2b2b2b; }
.chat-scroll i { display: block; width: 16px; height: 363px; border-radius: 8px; background: #6b6b6b; }
.backdrop { left: 0; top: 76px; width: 400px; height: 900px; border: 2px solid #606164; border-left-color: #333; border-radius: 20px; background: #1d1d1f; }
.page { left: 222px; top: 76px; width: 2666px; height: 1728px; border-radius: 20px; background: #d8d8d8; box-shadow: 0 0 0 1px #000, 0 0 40px #0008; display: flex; flex-direction: column; }
.page::after { content: ""; position: absolute; inset: 0; border: 2px solid; border-color: #606164 #55565855 #0000 #55565855; border-radius: 20px; }
.page-head { height: 104px; background: linear-gradient(#232426, #242527); }
.page-bar { height: 57px; background: #101111; border-top: 2px solid #000; }
.page-body { flex: 1; padding: 957px 6px 0 0; background: linear-gradient(#0000 90%, #fff9), linear-gradient(90deg, #a5a5a5 98.600%, #b9b9b9 98.850%, #cfcfcf 99.600%, #d4d4d4); }
.page-body i { display: block; width: 16px; height: 146px; margin-left: auto; border-radius: 6px; background: #919191; }
.sliver { position: absolute; left: 0; top: 162px; width: 4px; height: 116px; background: #d8d8d8; }

/* code editor */
.code { left: 0; top: 106px; width: 2836px; height: 1700px; border-radius: 20px; background: #1a1a1a; box-shadow: 0 0 0 1px #000, 0 0 30px #0008; display: flex; flex-direction: column; border-left: 2px solid #484848; clip-path: polygon(5px 0, 100% 0, 100% 100%, 0 100%, 0 175px, 5px 175px); }
.code-body { flex: 1; display: flex; }
.activity { position: relative; width: 114px; background: linear-gradient(#2b2b2b, #232323 98%, #333); padding: 1570px 0 0 24px; }
.activity-badge { position: absolute; left: 56px; top: 1588px; width: 38px; height: 38px; border-radius: 50%; background: #0368ae; color: #dfe7ee; font-size: 22px; line-height: 37px; font-weight: 500; text-align: center; }
.sidebar { width: 408px; padding-top: 1594px; background: #1b1b1c; }
.outline { display: flex; gap: 16px; align-items: center; height: 52px; padding: 3px 0 0 17px; border-top: 2px solid #343434; color: #9c9c9c; font-size: 26px; font-weight: 700; letter-spacing: .5px; }
.outline svg { fill: none; stroke: #9c9c9c; stroke-width: 2px; }
.editor { flex: 1; margin-right: 31px; border-right: 2px solid #282828; background: linear-gradient(#0d0d0d 96%, #191919); }
.statusbar {
  display: grid; align-items: center; height: 54px; flex: none; color: #e1e5e9; white-space: nowrap;
  grid-template-rows: 51px;
  grid-template-columns: 100px 39px 102px 73px 40px 27px 40px 57px 40px 221px 31px 129px 69px 40px 177px 297px 396px 169px 125px 74px 44px 178px 40px 184px 75px 1fr;
  background: #006db4; border-bottom: 2px solid #2e86c1;
  font-size: 28.500px; letter-spacing: -.34px;
}
.statusbar svg { fill: none; stroke: #e1e5e9; stroke-width: 2px; }
.statusbar .cursor-pos { letter-spacing: -.12px; }
.statusbar .port { letter-spacing: 0; }
.remote { width: 81px; height: 54px; align-self: start; background: #17825d; display: grid; place-items: center; border-bottom: 2px solid #46967a; }

/* browser */
.chrome { left: 21px; top: 98px; width: 2836px; height: 1592px; border: 2px solid #505155; border-top-color: #6a6b6e; border-radius: 20px; background: #202124; box-shadow: 0 0 0 1px #000, 0 0 50px 10px #0009; display: flex; flex-direction: column; color: #f1f3f4; }
.tabstrip { display: flex; height: 82px; padding: 14px 33px 0 39px; }
.lights { display: flex; gap: 16px; width: 160px; padding-top: 15px; }
.lights i { width: 24px; height: 24px; border-radius: 50%; }
.red { background: #ec6a5e; } .yellow { background: #f4bf4f; } .green { background: #61c554; }
.tab { display: flex; align-items: center; height: 68px; color: #bfc1c4; font-size: 23px; letter-spacing: .5px; }
.tab-title { overflow: hidden; white-space: nowrap; line-height: 34px; }
.fade { -webkit-mask-image: linear-gradient(90deg, #000 86%, #0000 103%); mask-image: linear-gradient(90deg, #000 86%, #0000 103%); }
.tab .x { margin-left: auto; fill: none; stroke: #c3c5c8; stroke-width: 2.600px; }
.tab-video { width: 463px; padding-left: 8px; letter-spacing: .35px; }
.tab-video::after { content: ""; width: 2px; height: 40px; background: #57595d; margin-left: 21px; }
.tab-video .tab-title { width: 308px; margin: -1px 0 0 16px; }
.speaker { fill: #c3c5c8; margin-left: 15px; }
.tab-course { width: 477px; padding: 0 22px 0 23px; }
.tab-course .tab-title { width: 346px; margin-left: 16px; }
.tab-active { position: relative; width: 480px; padding: 0 24px 0 30px; border-radius: 16px 16px 0 0; background: #35363a; color: #fff; }
.tab-active .x { stroke: #fff; }
.tab-active .tab-title { margin-left: 15px; font-feature-settings: "tnum"; letter-spacing: -.35px; }
.tab-active::before, .tab-active::after { content: ""; position: absolute; bottom: 0; width: 16px; height: 16px; }
.tab-active::before { left: -16px; background: radial-gradient(circle at 0 0, #0000 15.500px, #35363a 16px); }
.tab-active::after { right: -16px; background: radial-gradient(circle at 100% 0, #0000 15.500px, #35363a 16px); }
.plus { align-self: center; margin-left: 32px; fill: none; stroke: #c3c5c8; stroke-width: 3.600px; stroke-linecap: round; }
.chevron { align-self: center; margin-left: auto; fill: none; stroke: #c3c5c8; stroke-width: 3px; }
.toolbar { display: grid; align-items: center; height: 74px; flex: none; padding: 0 0 0 28px; background: #35363a; border-bottom: 2px solid #5c5d61;
  grid-template-columns: 64px 64px 58px 2303px 64px 64px 58px 82px 1fr; }
.nav { fill: none; stroke: #f1f3f4; stroke-width: 3px; }
.omnibox { display: flex; align-items: center; width: 2275px; height: 56px; padding: 0 19px 0 21px; border-radius: 28px; background: #202124; font-size: 27px; }
.url { margin-left: 17px; letter-spacing: -.7px; font-feature-settings: "tnum"; }
.url em { color: #8d9196; }
.star { margin-left: auto; fill: #bdbfc2; }
.avatar { width: 44px; height: 44px; border-radius: 50%; background: #495a65; font-size: 25px; line-height: 44px; text-align: center; }
.error { padding: 257px 0 0 815px; color: #9aa0a1; }
.error svg { margin-bottom: 93px; }
.error h1 { margin: 0; font-size: 47px; line-height: 60px; font-weight: 550; letter-spacing: -1.520px; }
.error p { margin: 33px 0 0; font-size: 29px; line-height: 48px; letter-spacing: -.09px; white-space: nowrap; }
.error p b { font-feature-settings: "tnum"; letter-spacing: -.28px; }
.error small { display: block; margin-top: 31px; font-size: 24px; line-height: 30px; letter-spacing: .3px; }

/* dock */
.dock {
  position: absolute; left: 137px; top: 1810px; width: 2751px; height: 144px; display: flex; gap: 30px; padding: 19px 0 0 18px;
  border: 2px solid #404245; border-radius: 44px;
  background: linear-gradient(90deg, #111314, #131718 8%, #141c35 14%, #14204a 19%, #131b27 28%, #15191b 40%, #16191c 55%, #1b1e2b 62%, #1a1c1d 70%, #33475f 75%, #2b4264 78%, #17263f 81%, #131820 86%, #151718 92%);
}
.app { position: relative; width: 92px; height: 121px; flex: none; }
.app svg { width: 92px; height: 92px; }
.app.on::after { content: ""; position: absolute; left: 41px; bottom: 2px; width: 8px; height: 8px; border-radius: 50%; background: #989a9e; }
.app.talk svg { width: 96px; height: 96px; margin: -2px; }
.app.pdf svg { width: 107px; height: 104px; margin: -9px 0 0 -8px; }
.petals rect { mix-blend-mode: multiply; opacity: .92; }
.badge { position: absolute; left: 64px; top: -10px; width: 43px; height: 43px; border-radius: 50%; background: #e65240; color: #fff; font-size: 23px; line-height: 43px; font-weight: 400; text-align: center; }
.cal-m { font: 600 19px Inter, sans-serif; fill: #fff; text-anchor: middle; }
.cal-d { font: 300 56px Inter, sans-serif; fill: #222; text-anchor: middle; }
.talk-t { font: 800 25px Inter, sans-serif; fill: #f8e44c; }
.dict { font: 46px "Noto Serif", "Liberation Serif", serif; fill: #f6efee; text-anchor: middle; }
.divider { width: 2px; height: 108px; margin: -3px 0 0 13px; background: #515355; }
.trash { width: 82px; height: 106px; margin: -9px 0 0 15px; }
```
